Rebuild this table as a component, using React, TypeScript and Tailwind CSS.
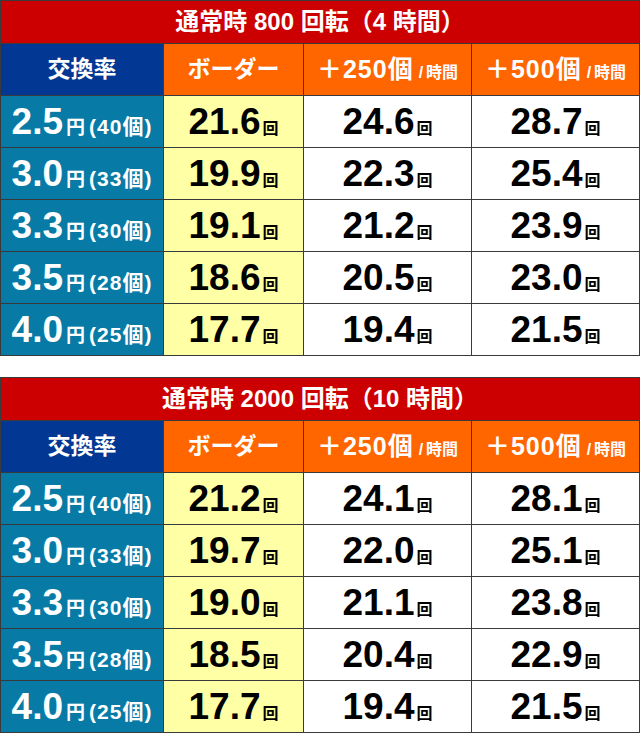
const FONT = "font-['Liberation_Sans','Noto_Sans_CJK_JP',sans-serif]";

type Row = { rate: string; per: string; border: string; a: string; b: string };

const TABLES: { title: string; rows: Row[] }[] = [
  {
    title: "通常時 800 回転（4 時間）",
    rows: [
      { rate: "2.5", per: "40", border: "21.6", a: "24.6", b: "28.7" },
      { rate: "3.0", per: "33", border: "19.9", a: "22.3", b: "25.4" },
      { rate: "3.3", per: "30", border: "19.1", a: "21.2", b: "23.9" },
      { rate: "3.5", per: "28", border: "18.6", a: "20.5", b: "23.0" },
      { rate: "4.0", per: "25", border: "17.7", a: "19.4", b: "21.5" },
    ],
  },
  {
    title: "通常時 2000 回転（10 時間）",
    rows: [
      { rate: "2.5", per: "40", border: "21.2", a: "24.1", b: "28.1" },
      { rate: "3.0", per: "33", border: "19.7", a: "22.0", b: "25.1" },
      { rate: "3.3", per: "30", border: "19.0", a: "21.1", b: "23.8" },
      { rate: "3.5", per: "28", border: "18.5", a: "20.4", b: "22.9" },
      { rate: "4.0", per: "25", border: "17.7", a: "19.4", b: "21.5" },
    ],
  },
];

function Count({ value }: { value: string }) {
  return (
    <span className="flex items-baseline">
      <span className="text-[37px] leading-none font-bold">{value}</span>
      <span className="text-[16px] leading-none font-bold ml-[2px]">回</span>
    </span>
  );
}

function BonusHead({ amount }: { amount: string }) {
  return (
    <div className="bg-[#ff6600] text-white flex items-center justify-center">
      <span className="flex items-baseline">
        <span className="text-[25px] leading-none font-bold tracking-[1px]">＋{amount}個</span>
        <span className="text-[16px] leading-none font-bold ml-[5px]">/</span>
        <span className="text-[16px] leading-none font-bold ml-[3px]">時間</span>
      </span>
    </div>
  );
}

function RateTable({ title, rows }: { title: string; rows: Row[] }) {
  return (
    <div className="grid grid-cols-[162px_139px_167px_1fr] grid-rows-[42px_51px_repeat(5,51px)] gap-px p-px bg-[#3a3a3a]">
      <div className="col-span-4 bg-[#cc0000] text-white flex items-center justify-center text-[24px] font-bold">
        {title}
      </div>

      <div className="bg-[#023893] text-white flex items-center justify-center text-[23px] font-bold">交換率</div>
      <div className="bg-[#ff6600] text-white flex items-center justify-center text-[23px] font-bold">ボーダー</div>
      <BonusHead amount="250" />
      <BonusHead amount="500" />

      {rows.map((r) => (
        <div key={r.rate} className="contents">
          <div className="bg-[#077ba5] text-white flex items-center justify-center">
            <span className="flex items-baseline">
              <span className="text-[37px] leading-none font-bold">{r.rate}</span>
              <span className="text-[19px] leading-none font-bold ml-[3px]">円</span>
              <span className="text-[21px] leading-none font-bold ml-[4px] tracking-[1px]">({r.per}個)</span>
            </span>
          </div>
          <div className="bg-[#ffffa6] text-black flex items-center justify-center">
            <Count value={r.border} />
          </div>
          <div className="bg-white text-black flex items-center justify-center">
            <Count value={r.a} />
          </div>
          <div className="bg-white text-black flex items-center justify-center">
            <Count value={r.b} />
          </div>
        </div>
      ))}
    </div>
  );
}

export default function App() {
  return (
    <div className={`w-[640px] h-[746px] bg-white flex flex-col gap-[21px] ${FONT}`}>
      {TABLES.map((t) => (
        <RateTable key={t.title} title={t.title} rows={t.rows} />
      ))}
    </div>
  );
}
